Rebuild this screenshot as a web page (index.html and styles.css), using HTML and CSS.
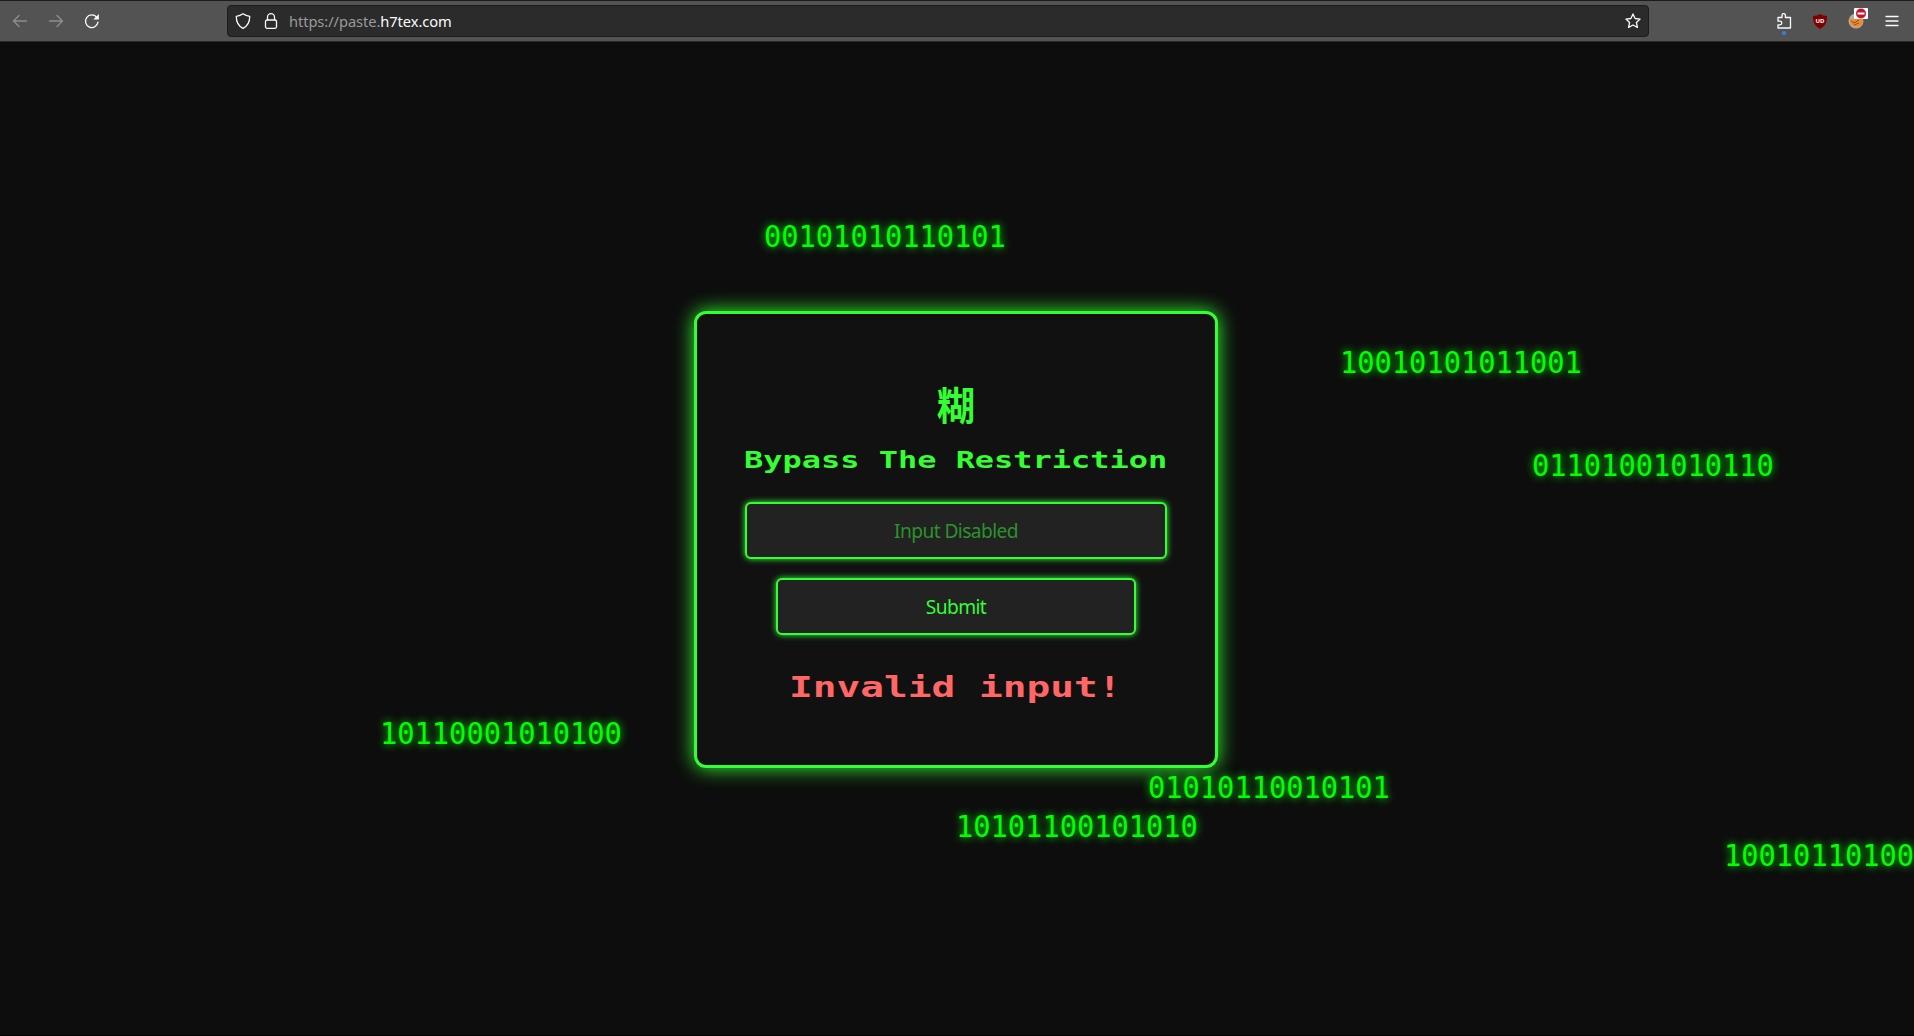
FILE: index.html
```html
<!DOCTYPE html>
<html lang="en">
<head>
<meta charset="utf-8">
<title>Paste</title>
<link rel="stylesheet" href="styles.css">
</head>
<body>
<header class="toolbar">
  <nav class="nav">
    <svg class="icon dim" viewBox="0 0 16 16"><path d="M14.500 8H1.500M7 2.500L1.500 8 7 13.500"/></svg>
    <svg class="icon dim" viewBox="0 0 16 16"><path d="M1.500 8h13M9 2.500L14.500 8 9 13.500"/></svg>
    <svg class="icon reload" viewBox="0 0 16 16"><path d="M14 9.200A6.300 6.300 0 1 1 12.600 4.200"/><path class="solid" d="M14.900 1v5.600H9.300z"/></svg>
  </nav>
  <div class="urlbar">
    <svg class="icon" viewBox="0 0 16 16"><path d="M8 .8c2 1.600 4.300 2.300 6.700 2.500C14.800 9 12.500 13 8 15.300 3.500 13 1.200 9 1.300 3.300 3.700 3.100 6 2.400 8 .8z"/></svg>
    <svg class="icon" viewBox="0 0 16 16"><rect x="2.500" y="7" width="11" height="8.300" rx="1.500"/><path d="M4.500 7V4.200a3.500 3.500 0 0 1 7 0V7"/></svg>
    <span class="url">https://paste.<b>h7tex.com</b></span>
    <svg class="icon star" viewBox="0 0 16 16"><path d="M8 .9l2.100 4.600 5 .6-3.700 3.400 1 5L8 12l-4.400 2.500 1-5L.9 6.100l5-.6z"/></svg>
  </div>
  <div class="tools">
    <div class="tool ext"><svg class="icon" viewBox="0 0 16 16"><path d="M2 4.500h4V2.300a1.700 1.700 0 0 1 3.400 0v2.200H14.500V15H2v-3.200h2a1.800 1.800 0 0 0 0-3.600H2z"/></svg></div>
    <svg class="ublock" viewBox="0 0 14 15"><path d="M7 0c2 1.300 4.500 1.900 7 2 0 6-1.500 10-7 13C1.500 12 0 8 0 2 2.500 1.900 5 1.300 7 0z"/><text x="7" y="9">UD</text></svg>
    <div class="tool cookie">
      <svg class="face" viewBox="0 0 16 16"><circle cx="8" cy="8" r="7.500" fill="#b9aa9b"/><path d="M1 5l4 2 5-3 5 2-1 6-5 2.500L3 12z" fill="#ef8b2c"/><path d="M3 8l3 2 5-3M6 12l5-2" stroke="#7d543a" fill="none"/></svg>
      <svg class="badge" viewBox="0 0 14 11"><rect width="14" height="11" rx="1" fill="#fff"/><circle cx="7" cy="5.500" r="5" fill="#c4142f"/><path d="M3.500 5.500h7" stroke="#fff" stroke-width="2"/></svg>
    </div>
    <svg class="icon menu" viewBox="0 0 16 16"><path d="M2 3.500h12M2 8h12M2 12.500h12"/></svg>
  </div>
</header>
<main class="page">
  <span class="binary b1">00101010110101</span>
  <span class="binary b2">10010101011001</span>
  <span class="binary b3">01101001010110</span>
  <span class="binary b4">10110001010100</span>
  <span class="binary b5">01010110010101</span>
  <span class="binary b6">10101100101010</span>
  <span class="binary b7">10010110100</span>
  <section class="card">
    <div class="kanji">糊</div>
    <h1 class="title"><span>Bypass The Restriction</span></h1>
    <input class="field" placeholder="Input Disabled" disabled>
    <button class="submit">Submit</button>
    <p class="error"><span>Invalid input!</span></p>
  </section>
</main>
</body>
</html>
```
FILE: styles.css
```css
* { box-sizing: border-box; }
body {
  margin: 0;
  height: 1036px;
  display: flex;
  flex-direction: column;
  overflow: hidden;
  background: #0d0d0d;
  font-family: "Noto Sans", sans-serif;
}
.toolbar {
  height: 42px;
  flex: none;
  display: flex;
  align-items: center;
  background: #535353;
  border-top: 1px solid #1c1c1c;
  border-bottom: 1px solid #2a2a2a;
}
.nav { width: 227px; display: flex; gap: 20px; padding-left: 12px; }
.icon {
  width: 16px;
  height: 16px;
  flex: none;
  fill: none;
  stroke: #fbfbfe;
  stroke-width: 1.3;
  stroke-linejoin: round;
  stroke-linecap: round;
}
.dim { stroke: #8e8e8e; }
.solid { fill: #fbfbfe; stroke: none; }
.urlbar {
  width: 1422px;
  height: 32px;
  display: flex;
  align-items: center;
  padding: 0 7px;
  background: #2b2b2b;
  border: 1px solid #1c1c1c;
  border-radius: 4px;
  gap: 12px;
}
.url { margin-left: -2px; font-size: 14.67px; line-height: 20px; letter-spacing: -.07px; color: #9a9a9a; }
.url b { font-weight: 400; color: #fbfbfe; }
.star { margin-left: auto; }
.tools { display: flex; align-items: center; margin-left: 127px; gap: 20px; }
.tool { position: relative; width: 16px; height: 16px; }
.ext .icon { display: block; }
.ext::after {
  content: "";
  position: absolute;
  left: 6px;
  top: 18px;
  width: 4px;
  height: 4px;
  border-radius: 2px;
  background: #3584e4;
}
.ublock { width: 14px; height: 15px; margin-left: 1px; fill: #800000; }
.ublock text { fill: #fff; font: bold 6px "Noto Sans", sans-serif; text-anchor: middle; }
.cookie { margin-left: 1px; }
.face { display: block; width: 16px; height: 16px; }
.badge { position: absolute; left: 6px; top: -5px; width: 14px; height: 11px; }

.page {
  position: relative;
  flex: 1;
  display: flex;
  justify-content: center;
  align-items: flex-start;
  padding: 269px 2px 0 0;
  border-bottom: 1px solid #000;
}
.binary {
  position: absolute;
  font: 28.8px/34px "DejaVu Sans Mono", monospace;
  letter-spacing: -.06px;
  color: #0f0;
  text-shadow: 0 0 8px #0f0;
  white-space: nowrap;
  transform: scaleY(1.05);
}
.b1 { left: 764px; top: 178px; }
.b2 { left: 1340px; top: 304px; }
.b3 { left: 1532px; top: 407px; }
.b4 { left: 380px; top: 674px; }
.b5 { left: 1148px; top: 728px; }
.b6 { left: 956px; top: 767px; }
.b7 { left: 1724px; top: 796px; }

.card {
  position: relative;
  width: 524px;
  height: 457px;
  display: flex;
  flex-direction: column;
  align-items: center;
  padding: 61px 48px 0;
  background: #111;
  border: 3px solid #3f3;
  border-radius: 12px;
  box-shadow: 0 0 20px #3f3;
  color: #3f3;
}
.kanji { font: bold 38.4px/56px "Noto Sans CJK JP", sans-serif; }
.title {
  margin: 15px 0 0;
  font: bold 23.5px/28px "DejaVu Sans Mono", monospace;
  white-space: nowrap;
}
.title span { display: inline-block; transform: scaleX(1.36); }
.field, .submit {
  height: 57px;
  padding: 0;
  background: #222;
  border: 2px solid #3f3;
  border-radius: 6px;
  box-shadow: 0 0 6px #3f3;
  color: #3f3;
  font: 19.2px "Noto Sans", sans-serif;
  letter-spacing: -.6px;
  text-align: center;
}
.field { width: 422px; margin-top: 28px; }
.field::placeholder { color: #2a932a; opacity: 1; }
.submit { width: 360px; margin-top: 19px; }
.error {
  margin: 34px 0 0;
  font: bold 28.8px/36px "DejaVu Sans Mono", monospace;
  color: #f66;
  white-space: nowrap;
}
.error span { display: inline-block; transform: translateX(-1px) scaleX(1.37); }
```
